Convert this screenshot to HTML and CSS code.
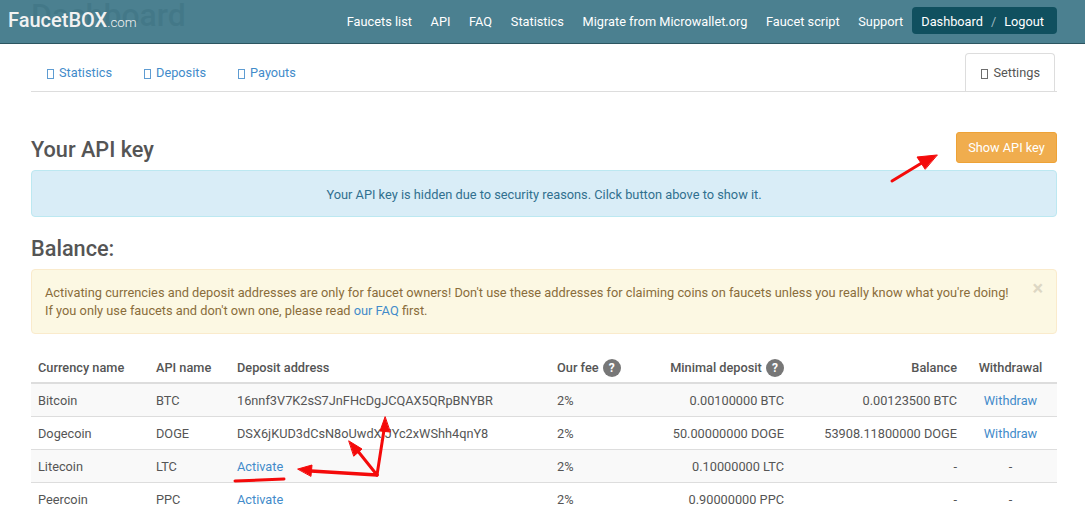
FILE: index.html
```html
<!DOCTYPE html>
<html lang="en">
<head>
<meta charset="utf-8">
<title>FaucetBOX.com</title>
<link rel="stylesheet" href="styles.css">
</head>
<body>
<div class="ghost-title">Dashboard</div>
<header class="topbar">
  <a class="brand" href="#">FaucetBOX<small>.com</small></a>
  <nav class="topnav">
    <a href="#">Faucets list</a>
    <a href="#">API</a>
    <a href="#">FAQ</a>
    <a href="#">Statistics</a>
    <a href="#">Migrate from Microwallet.org</a>
    <a href="#">Faucet script</a>
    <a href="#">Support</a>
    <div class="userbox"><a href="#">Dashboard</a><span class="sep">/</span><a href="#">Logout</a></div>
  </nav>
</header>
<main class="container">
  <ul class="tabs">
    <li><a href="#"><i class="tofu"></i>Statistics</a></li>
    <li><a href="#"><i class="tofu"></i>Deposits</a></li>
    <li><a href="#"><i class="tofu"></i>Payouts</a></li>
    <li class="tab-active"><a href="#"><i class="tofu"></i>Settings</a></li>
  </ul>
  <div class="api-head">
    <h2>Your API key</h2>
    <button class="btn-warning" type="button">Show API key</button>
  </div>
  <div class="alert alert-info">Your API key is hidden due to security reasons. Cilck button above to show it.</div>
  <h2 class="balance-title">Balance:</h2>
  <div class="alert alert-warning">
    <span class="close">×</span>
    Activating currencies and deposit addresses are only for faucet owners! Don't use these addresses for claiming coins on faucets unless you really know what you're doing!<br>
    If you only use faucets and don't own one, please read <a href="#">our FAQ</a> first.
  </div>
  <table class="coins">
    <colgroup>
      <col class="c1"><col class="c2"><col class="c3"><col class="c4"><col class="c5"><col class="c6"><col class="c7">
    </colgroup>
    <thead>
      <tr>
        <th>Currency name</th><th>API name</th><th>Deposit address</th>
        <th>Our fee <span class="help">?</span></th>
        <th class="num">Minimal deposit <span class="help">?</span></th>
        <th class="num">Balance</th><th class="mid">Withdrawal</th>
      </tr>
    </thead>
    <tbody>
      <tr><td>Bitcoin</td><td>BTC</td><td>16nnf3V7K2sS7JnFHcDgJCQAX5QRpBNYBR</td><td>2%</td><td class="num">0.00100000 BTC</td><td class="num">0.00123500 BTC</td><td class="mid"><a href="#">Withdraw</a></td></tr>
      <tr><td>Dogecoin</td><td>DOGE</td><td>DSX6jKUD3dCsN8oUwdXjJYc2xWShh4qnY8</td><td>2%</td><td class="num">50.00000000 DOGE</td><td class="num">53908.11800000 DOGE</td><td class="mid"><a href="#">Withdraw</a></td></tr>
      <tr><td>Litecoin</td><td>LTC</td><td><a href="#">Activate</a></td><td>2%</td><td class="num">0.10000000 LTC</td><td class="num">-</td><td class="mid">-</td></tr>
      <tr><td>Peercoin</td><td>PPC</td><td><a href="#">Activate</a></td><td>2%</td><td class="num">0.90000000 PPC</td><td class="num">-</td><td class="mid">-</td></tr>
    </tbody>
  </table>
</main>
<svg class="arrows" width="1085" height="513" viewBox="0 0 1085 513" aria-hidden="true">
  <g fill="#f40a0a" stroke="#f40a0a" stroke-linecap="round">
    <path d="M892 181L925 161" stroke-width="3" fill="none"/>
    <path d="M937 155L917 157L925 169Z" stroke-width="1"/>
    <path d="M377 475L311 471" stroke-width="3.5" fill="none"/>
    <path d="M298 469L312 465L311 476Z" stroke-width="1"/>
    <path d="M377 475L357 450" stroke-width="3" fill="none"/>
    <path d="M349 441L362 449L354 456Z" stroke-width="1"/>
    <path d="M377 475L384 430" stroke-width="3" fill="none"/>
    <path d="M385 417L380 431L390 432Z" stroke-width="1"/>
    <path d="M235 481Q260 480 284 479" stroke-width="3" fill="none"/>
  </g>
</svg>
</body>
</html>
```
FILE: styles.css
```css
* { box-sizing: border-box; }
html, body { margin: 0; height: 513px; overflow: hidden; }
body {
  position: relative;
  background: #fff;
  color: #555;
  font-family: Roboto, "Liberation Sans", sans-serif;
  font-size: 12.75px;
  line-height: 18px;
}
a { color: #428bca; text-decoration: none; }

.ghost-title {
  position: absolute;
  left: 31px;
  top: -5px;
  font-size: 32px;
  line-height: 40px;
  font-weight: 500;
  color: #d4d4d0;
}
.topbar {
  position: relative;
  height: 44px;
  background: rgba(35, 100, 120, 0.82);
  border-bottom: 1px solid #2c5560;
  display: flex;
  justify-content: space-between;
  align-items: center;
  padding: 0 28px 0 8px;
}
.brand { color: #f2f2f2; font-size: 20px; font-weight: 500; }
.brand small { font-size: 13.3px; font-weight: 300; }
.topnav { display: flex; align-items: center; gap: 18.7px; }
.topnav a { color: #fff; }
.userbox {
  display: flex;
  align-items: center;
  height: 27px;
  padding: 2px 13px 0 9px;
  margin: 0 0 2px -9.7px;
  background: #10505f;
  border-radius: 4px;
}
.sep { color: #9db8c0; margin: 0 8px; }

.container { width: 1026px; margin-left: 31px; }
.tabs {
  list-style: none;
  margin: 9px 0 0;
  padding: 0;
  display: flex;
  height: 39px;
  border-bottom: 1px solid #ddd;
}
.tabs li a {
  display: block;
  height: 39px;
  padding: 11px 16px 9px;
}
.tab-active {
  margin-left: auto;
  margin-right: 2px;
  background: #fff;
  border: 1px solid #ddd;
  border-bottom: 0;
  border-radius: 4px 4px 0 0;
}
.tab-active a { color: #555; }
.tabs .tab-active a { padding: 10px 14px 10px 15px; height: 38px; }
.tofu {
  display: inline-block;
  width: 7px;
  height: 10px;
  border: 1px solid currentColor;
  margin-right: 5px;
  vertical-align: -2px;
  opacity: 0.85;
}

.api-head {
  display: flex;
  justify-content: space-between;
  align-items: center;
  margin-top: 40px;
  height: 31px;
}
.api-head h2 { position: relative; top: 2px; }
h2 { margin: 0; font-size: 21.7px; line-height: 30px; font-weight: 500; color: #555; }
.btn-warning {
  width: 101px;
  height: 31px;
  padding: 0;
  background: #f0ad4e;
  border: 1px solid #eea236;
  border-radius: 3px;
  color: #fff;
  font: inherit;
}
.alert { border: 1px solid; border-radius: 4px; font-size: 12.8px; }
.alert-info {
  margin-top: 7px;
  height: 47px;
  line-height: 47px;
  text-align: center;
  background: #d9edf7;
  border-color: #bce8f1;
  color: #31708f;
}
.balance-title { margin-top: 17px; }
.alert-warning {
  position: relative;
  margin-top: 5px;
  height: 65px;
  padding: 14px 13px;
  background: #fcf8e3;
  border-color: #faebcc;
  color: #8a6d3b;
}
.close {
  position: absolute;
  right: 13px;
  top: 9px;
  font-size: 20px;
  font-weight: 700;
  color: #ddd7c4;
}

.coins { width: 1026px; margin-top: 17px; border-collapse: collapse; table-layout: fixed; }
.c1 { width: 118px; }
.c2 { width: 81px; }
.c3 { width: 320px; }
.c4 { width: 75px; }
.c5 { width: 166px; }
.c6 { width: 173px; }
.c7 { width: 93px; }
.coins th, .coins td { padding: 8px 7px 6px; height: 33px; text-align: left; white-space: nowrap; line-height: 18px; }
.coins th { color: #555; font-weight: 500; border-bottom: 2px solid #ddd; height: 32px; padding: 7px 7px 5px; }
.coins td { border-bottom: 1px solid #ddd; }
.coins tbody tr:nth-child(odd) { background: #f9f9f9; }
.coins .num { text-align: right; }
.coins .mid { text-align: center; }
.help {
  display: inline-block;
  width: 18px;
  height: 18px;
  line-height: 18px;
  margin: -2px 0 -2px 1px;
  border-radius: 50%;
  background: #777;
  color: #fff;
  font-size: 12px;
  font-weight: 700;
  text-align: center;
  vertical-align: middle;
}
.arrows { position: absolute; left: 0; top: 0; pointer-events: none; }
```
